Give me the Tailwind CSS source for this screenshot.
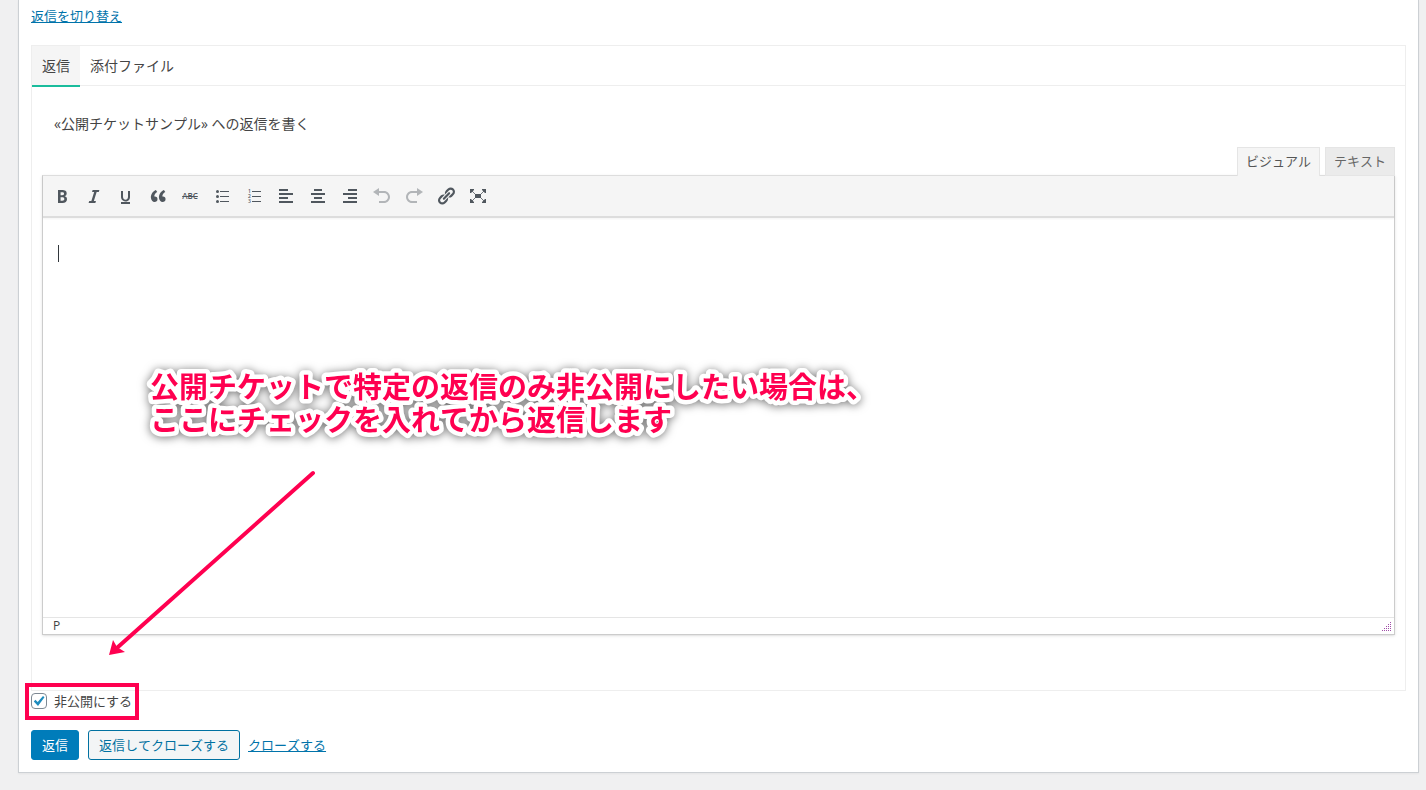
<!DOCTYPE html>
<html lang="ja">
<head>
    <meta charset="UTF-8">
    <meta name="viewport" content="width=device-width, initial-scale=1.0">
    <script src="https://cdn.jsdelivr.net/npm/@tailwindcss/browser@4"></script>
    <title>返信</title>
</head>
<body class="bg-[#f0f0f1] min-h-screen font-['Open_Sans','Noto_Sans_CJK_JP',sans-serif] [font-kerning:none] text-[13px] leading-5 text-[#444]">

<main class="relative ml-[18px] mr-[7px] px-3 pt-[6px] pb-3 bg-white border-x border-b border-[#ccd0d4] shadow-xs">
    <a href="#reply" class="block w-fit text-[#0073aa] underline">返信を切り替え</a>

    <section id="reply" class="mt-[19px] border border-[#eee]">
        <nav class="flex items-start h-10 border-b border-[#eee] text-sm">
            <button class="h-[41px] px-[10px] bg-[#f5f5f5] border-b-2 border-[#1abc9c]">返信</button>
            <button class="h-[41px] px-[10px] border-b-2 border-transparent">添付ファイル</button>
        </nav>

        <div class="px-[10px] pt-7 pb-[55px]">
            <label for="editor" class="block px-3 text-sm">«公開チケットサンプル» への返信を書く</label>

            <!-- editor mode tabs -->
            <div class="relative flex justify-end gap-[5px] mt-[13px] -mb-px">
                <button class="h-[29px] px-2 pb-[2px] bg-[#f5f5f5] border border-b-0 border-[#e5e5e5] text-[#555]">ビジュアル</button>
                <button class="h-[29px] px-2 pb-[2px] bg-[#ebebeb] border border-[#e5e5e5] text-[#666]">テキスト</button>
            </div>

            <div class="border border-[#ccc] border-t-[#ddd] shadow-sm">
                <div class="flex items-center h-[42px] px-[3px] bg-[#f5f5f5] border-b-2 border-[#ddd] shadow-xs text-[#50575e]">
                    <button aria-label="太字" class="mx-[2px] w-7 h-7 flex items-center justify-center">
                        <svg class="w-5 h-5" viewBox="0 0 20 20" fill="currentColor"><path d="M6 4v13h4.54c1.37 0 2.46-.33 3.26-1 .8-.66 1.2-1.58 1.2-2.77 0-.84-.17-1.51-.51-2.01s-.9-.85-1.67-1.03v-.09c.57-.1 1.02-.4 1.36-.9s.51-1.13.51-1.91c0-1.14-.39-1.98-1.17-2.5C12.75 4.26 11.5 4 9.78 4H6zm2.57 5.15V6.26h1.36c.73 0 1.27.11 1.61.32.34.22.51.58.51 1.07 0 .54-.16.92-.47 1.15s-.82.35-1.51.35h-1.5zm0 2.19h1.6c1.44 0 2.16.53 2.16 1.61 0 .6-.17 1.05-.51 1.34s-.86.43-1.57.43H8.57v-3.38z"/></svg>
                    </button>
                    <button aria-label="イタリック" class="mx-[2px] w-7 h-7 flex items-center justify-center">
                        <svg class="w-5 h-5" viewBox="0 0 20 20" fill="currentColor"><path d="M14.78 6h-2.13l-2.8 9h2.12l-.62 2H4.6l.62-2h2.14l2.8-9H8.03l.62-2h6.75z"/></svg>
                    </button>
                    <button aria-label="下線" class="mx-[2px] w-7 h-7 flex items-center justify-center">
                        <svg class="w-5 h-5" viewBox="0 0 20 20" fill="currentColor"><path d="M14 5h-2v5.71c0 1.99-1.12 2.98-2.45 2.98-1.32 0-2.55-1-2.55-2.96V5H5v5.87c0 1.91 1 4.54 4.48 4.54 3.49 0 4.52-2.58 4.52-4.5V5zm0 13v-2H5v2h9z"/></svg>
                    </button>
                    <button aria-label="引用" class="mx-[2px] w-7 h-7 flex items-center justify-center">
                        <svg class="w-5 h-5" viewBox="0 0 20 20" fill="currentColor"><path d="M9.49 13.22c0-.74-.2-1.38-.61-1.9-.62-.78-1.83-.88-2.53-.72-.29-1.65 1.11-3.75 2.92-4.65L7.88 4c-2.73 1.3-5.42 4.28-4.96 8.05C3.21 14.43 4.59 16 6.54 16c.85 0 1.56-.25 2.12-.75s.83-1.18.83-2.03zm8.05 0c0-.74-.2-1.38-.61-1.9-.63-.78-1.83-.88-2.53-.72-.29-1.65 1.11-3.75 2.92-4.65L15.93 4c-2.73 1.3-5.41 4.28-4.95 8.05.29 2.38 1.66 3.95 3.61 3.95.85 0 1.56-.25 2.12-.75s.83-1.18.83-2.03z"/></svg>
                    </button>
                    <button aria-label="打ち消し" class="mx-[2px] w-7 h-7 flex items-center justify-center text-[8px] font-semibold line-through">ABC</button>
                    <button aria-label="番号なしリスト" class="mx-[2px] w-7 h-7 flex items-center justify-center">
                        <svg class="w-5 h-5" viewBox="0 0 20 20" fill="currentColor"><circle cx="5.5" cy="5.5" r="1.5"/><circle cx="5.5" cy="10.5" r="1.5"/><circle cx="5.5" cy="15.5" r="1.5"/><path d="M8 5h9v1H8zM8 10h9v1H8zM8 15h9v1H8z"/></svg>
                    </button>
                    <button aria-label="番号付きリスト" class="mx-[2px] w-7 h-7 flex items-center justify-center">
                        <svg class="w-5 h-5" viewBox="0 0 20 20" fill="currentColor"><g font-size="5" font-weight="600" font-family="Open Sans"><text x="4" y="7">1</text><text x="4" y="12">2</text><text x="4" y="17">3</text></g><path d="M8 5h9v1H8zM8 10h9v1H8zM8 15h9v1H8z"/></svg>
                    </button>
                    <button aria-label="左寄せ" class="mx-[2px] w-7 h-7 flex items-center justify-center">
                        <svg class="w-5 h-5" viewBox="0 0 20 20" fill="currentColor"><path d="M12 5V3H3v2h9zm5 4V7H3v2h14zm-5 4v-2H3v2h9zm5 4v-2H3v2h14z"/></svg>
                    </button>
                    <button aria-label="中央揃え" class="mx-[2px] w-7 h-7 flex items-center justify-center">
                        <svg class="w-5 h-5" viewBox="0 0 20 20" fill="currentColor"><path d="M14 5V3H6v2h8zm3 4V7H3v2h14zm-3 4v-2H6v2h8zm3 4v-2H3v2h14z"/></svg>
                    </button>
                    <button aria-label="右寄せ" class="mx-[2px] w-7 h-7 flex items-center justify-center">
                        <svg class="w-5 h-5" viewBox="0 0 20 20" fill="currentColor"><path d="M17 5V3H8v2h9zm0 4V7H3v2h14zm0 4v-2H8v2h9zm0 4v-2H3v2h14z"/></svg>
                    </button>
                    <button aria-label="取り消し" disabled class="mx-[2px] w-7 h-7 flex items-center justify-center opacity-40">
                        <svg class="w-5 h-5" viewBox="0 0 20 20" fill="currentColor"><path d="M12 5H7V2L1 6l6 4V7h5c2.2 0 4 1.8 4 4s-1.8 4-4 4H7v2h5c3.3 0 6-2.7 6-6s-2.7-6-6-6z"/></svg>
                    </button>
                    <button aria-label="やり直し" disabled class="mx-[2px] w-7 h-7 flex items-center justify-center opacity-40">
                        <svg class="w-5 h-5" viewBox="0 0 20 20" fill="currentColor"><path d="M8 5h5V2l6 4-6 4V7H8c-2.2 0-4 1.8-4 4s1.8 4 4 4h5v2H8c-3.3 0-6-2.7-6-6s2.7-6 6-6z"/></svg>
                    </button>
                    <button aria-label="リンクの挿入" class="mx-[2px] w-7 h-7 flex items-center justify-center">
                        <svg class="w-5 h-5" viewBox="0 0 20 20" fill="currentColor"><path d="M17.74 2.76c1.68 1.69 1.68 4.41 0 6.1l-1.53 1.52c-1.12 1.12-2.7 1.47-4.14 1.09l2.62-2.61.76-.77.76-.76c.84-.84.84-2.2 0-3.04-.84-.85-2.2-.85-3.04 0l-.77.76-3.38 3.38c-.37-1.44-.02-3.02 1.1-4.14l1.52-1.53c1.69-1.68 4.42-1.68 6.1 0zM8.59 13.43l5.34-5.34c.42-.42.42-1.1 0-1.52-.44-.43-1.13-.39-1.53 0l-5.33 5.34c-.42.42-.42 1.1 0 1.52.44.43 1.13.39 1.52 0zm-.76 2.29l4.14-4.15c.38 1.44.03 3.02-1.09 4.14l-1.52 1.53c-1.69 1.68-4.41 1.68-6.1 0-1.68-1.68-1.68-4.42 0-6.1l1.53-1.52c1.12-1.12 2.7-1.47 4.14-1.1l-4.14 4.15c-.85.84-.85 2.2 0 3.05.84.84 2.2.84 3.04 0z"/></svg>
                    </button>
                    <button aria-label="フルスクリーン" class="mx-[2px] w-7 h-7 flex items-center justify-center">
                        <svg class="w-5 h-5" viewBox="0 0 20 20" fill="currentColor"><path d="M7 8h6v4H7zM2 3h4v1L3 7H2zM18 3v4h-1l-3-3V3zM2 17v-4h1l3 3v1zM18 17h-4v-1l3-3h1z"/><path d="M3 4l5 5M17 4l-5 5M3 16l5-5M17 16l-5-5" stroke="currentColor" stroke-width=".8"/></svg>
                    </button>
                </div>

                <div class="relative">
                    <textarea id="editor" class="block w-full h-[399px] px-4 py-7 resize-none outline-none"></textarea>
                    <span class="absolute left-[15px] top-[27px] w-px h-[17px] bg-[#32373c]"></span>
                </div>

                <div class="flex items-center justify-between h-[17px] pl-[10px] pr-[2px] border-t border-[#e5e5e5] text-xs">
                    <span>P</span>
                    <svg class="w-[10px] h-[10px] self-end mb-[2px]" viewBox="0 0 10 10" fill="#a04fa8" shape-rendering="crispEdges"><path d="M8 0h1v1H8zM6 2h1v1H6zM8 2h1v1H8zM4 4h1v1H4zM6 4h1v1H6zM8 4h1v1H8zM2 6h1v1H2zM4 6h1v1H4zM6 6h1v1H6zM8 6h1v1H8zM0 8h1v1H0zM2 8h1v1H2zM4 8h1v1H4zM6 8h1v1H6zM8 8h1v1H8z"/></svg>
                </div>
            </div>
        </div>
    </section>

    <div class="relative flex items-center w-fit">
        <input type="checkbox" id="private" checked class="w-4 h-4 appearance-none bg-white border border-[#7e8993] rounded-sm">
        <svg class="absolute left-[2px] w-3 h-3 pointer-events-none" viewBox="0 0 12 12" fill="#1e8cbe"><path d="M10 1l1.5 1.2L5 11 .8 6.5l1.6-1.7L4.700 7z"/></svg>
        <label for="private" class="pl-[7px]">非公開にする</label>
        <span class="absolute -left-[6px] -right-[7px] -top-2 -bottom-[9px] border-4 border-[#ff0050] pointer-events-none"></span>
    </div>

    <div class="flex items-center mt-[19px]">
        <button class="h-[30px] px-[10px] bg-[#007cba] border border-[#007cba] rounded-[3px] text-white">返信</button>
        <button class="h-[30px] ml-[9px] px-[10px] bg-[#f3f5f6] border border-[#0071a1] rounded-[3px] text-[#0071a1]">返信してクローズする</button>
        <a href="#" class="ml-2 text-[#0073aa] underline">クローズする</a>
    </div>

    <!-- callout laid over the editor -->
    <svg class="absolute left-[111px] top-[351px] w-[760px] h-[106px] overflow-visible drop-shadow-[0_1px_5px_rgba(0,0,0,0.55)] pointer-events-none" viewBox="0 0 760 106" font-size="29" font-weight="700" fill="#ff0050" stroke="#fff" stroke-width="9" stroke-linejoin="round" paint-order="stroke">
        <text x="20" y="47">公開チケットで特定の返信のみ非公開にしたい場合は、</text>
        <text x="20" y="80">ここにチェックを入れてから返信します</text>
    </svg>
    <svg class="absolute left-[81px] top-[460px] w-[220px] h-[200px] pointer-events-none" viewBox="0 0 220 200">
        <path d="M213 13L18 187" stroke="#ff0050" stroke-width="4" stroke-linecap="round"/>
        <path d="M9 195L13 180L17 187L25 192Z" fill="#ff0050"/>
    </svg>
</main>

</body>
</html>
